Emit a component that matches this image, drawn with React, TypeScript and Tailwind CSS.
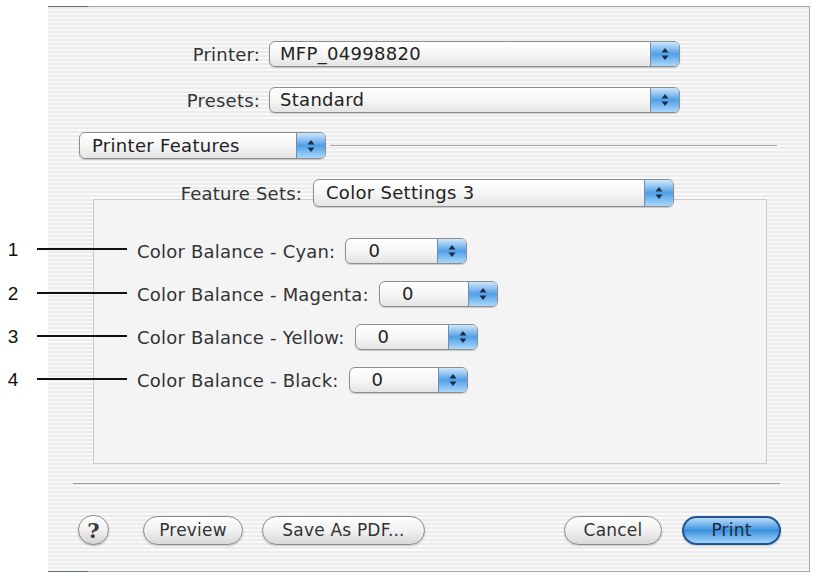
import React from 'react';

const stripes =
  'bg-[image:repeating-linear-gradient(to_bottom,#ececec_0px,#ececec_2px,#f9f9f9_2px,#f9f9f9_4px)]';

const colorRows = [
  { n: '1', label: 'Color Balance - Cyan:', width: 'w-[122px]' },
  { n: '2', label: 'Color Balance - Magenta:', width: 'w-[119px]' },
  { n: '3', label: 'Color Balance - Yellow:', width: 'w-[123px]' },
  { n: '4', label: 'Color Balance - Black:', width: 'w-[119px]' },
];

function Arrows() {
  return (
    <svg width="10" height="14" viewBox="0 0 10 14">
      <path d="M5 1 L8.5 5.5 L1.5 5.5 Z" fill="#1c2c48" />
      <path d="M5 13 L8.5 8.5 L1.5 8.5 Z" fill="#1c2c48" />
    </svg>
  );
}

function Popup({ value, className, pad = 'pl-[10px]' }: { value: string; className: string; pad?: string }) {
  return (
    <div
      className={`flex h-[26px] rounded-[6px] border border-[#8e8e8e] bg-linear-to-b from-white via-[#f6f6f6] to-[#e4e4e4] shadow-[0_1px_1px_rgba(0,0,0,0.18)] ${className}`}
    >
      <div className={`flex-1 flex items-center ${pad} text-[18px] tracking-[0.3px] text-[#222] leading-none whitespace-nowrap`}>{value}</div>
      <div className="w-[29px] flex items-center justify-center rounded-r-[5px] border-l border-[#6f8fb0] bg-linear-to-b from-[#cfe7fb] via-[#4f9fe6] to-[#a9d8fc]">
        <Arrows />
      </div>
    </div>
  );
}

function Pill({ label, className, blue = false }: { label: string; className: string; blue?: boolean }) {
  return (
    <div
      className={`h-[29px] flex items-center justify-center rounded-full text-[17px] tracking-[0.2px] leading-none shadow-[0_1px_2px_rgba(0,0,0,0.2)] ${
        blue
          ? 'border-2 border-[#1f5590] bg-linear-to-b from-[#b8dcfa] via-[#3a90dd] to-[#a2d4fa] text-[#1b2a3c]'
          : 'border border-[#8a8a8a] bg-linear-to-b from-white via-[#f1f1f1] to-[#d8d8d8] text-[#333]'
      } ${className}`}
    >
      {label}
    </div>
  );
}

export default function App() {
  return (
    <div className="relative w-[817px] h-[576px] bg-white overflow-hidden font-['DejaVu_Sans',sans-serif]">
      <div className="pt-[6px] pl-[48px]">
        <div className={`relative w-[762px] h-[566px] border-t border-b border-r border-[#a9a9a9] ${stripes} flex flex-col`}>
          <div className="absolute -top-px left-0 w-[40px] h-px bg-[#5f7070]" />
          <div className="absolute -bottom-px left-0 w-[40px] h-px bg-[#5f7070]" />

          {/* Printer / Presets */}
          <div className="mt-[34px] flex items-center h-[26px]">
            <div className="w-[212px] text-right text-[18px] tracking-[0.2px] text-[#333]">Printer:</div>
            <Popup value="MFP_04998820" className="ml-[9px] w-[411px]" />
          </div>
          <div className="mt-[20px] flex items-center h-[26px]">
            <div className="w-[212px] text-right text-[18px] tracking-[0.2px] text-[#333]">Presets:</div>
            <Popup value="Standard" className="ml-[9px] w-[411px]" />
          </div>

          {/* Panel selector */}
          <div className="mt-[19px] flex items-center h-[27px] pl-[31px] pr-[32px]">
            <Popup value="Printer Features" className="w-[247px] h-[27px]" pad="pl-[12px]" />
            <div className="flex-1 ml-[4px] h-px bg-[#a6a6a6]" />
          </div>

          {/* Feature sets */}
          <div className="relative z-10 mt-[20px] flex items-center h-[28px]">
            <div className="w-[254px] text-right text-[18px] tracking-[0.2px] text-[#333]">Feature Sets:</div>
            <Popup value="Color Settings 3" className="ml-[11px] w-[361px] h-[28px]" pad="pl-[12px]" />
          </div>

          <div className="ml-[45px] mt-[-8px] w-[674px] h-[265px] border border-[#cbcbcb] bg-[#f4f4f4] pt-[38px] pl-[43px] flex flex-col gap-[17px]">
            {colorRows.map((r) => (
              <div key={r.n} className="flex items-center h-[26px]">
                <div className="text-[18px] tracking-[0.2px] text-[#333] whitespace-nowrap">{r.label}</div>
                <Popup value="0" className={`ml-[10px] ${r.width}`} pad="pl-[22px]" />
              </div>
            ))}
          </div>

          <div className="ml-[25px] mt-[19px] w-[707px] h-px bg-[#9a9a9a]" />

          {/* Buttons */}
          <div className="mt-[31px] flex items-center h-[30px] pl-[30px] pr-[28px]">
            <div className="w-[31px] h-[30px] rounded-full border border-[#8a8a8a] bg-linear-to-b from-white via-[#f0f0f0] to-[#d4d4d4] shadow-[0_1px_2px_rgba(0,0,0,0.25)] flex items-center justify-center text-[21px] font-bold text-[#3a3a3a] font-['DejaVu_Serif',serif] leading-none">
              ?
            </div>
            <Pill label="Preview" className="ml-[34px] w-[100px]" />
            <Pill label="Save As PDF..." className="ml-[19px] w-[163px]" />
            <Pill label="Cancel" className="ml-auto w-[98px]" />
            <Pill label="Print" blue className="ml-[20px] w-[99px]" />
          </div>
        </div>
      </div>

      {/* Callout annotations */}
      {[249, 293, 336, 379].map((y, i) => (
        <React.Fragment key={y}>
          <div
            className="absolute left-[6px] w-[14px] text-center text-[19px] leading-none text-[#111] font-['Liberation_Sans',sans-serif]"
            style={{ top: y - 9 }}
          >
            {i + 1}
          </div>
          <div className="absolute left-[37px] w-[90px] h-[2px] bg-[#111]" style={{ top: y - 1 }} />
        </React.Fragment>
      ))}
    </div>
  );
}
